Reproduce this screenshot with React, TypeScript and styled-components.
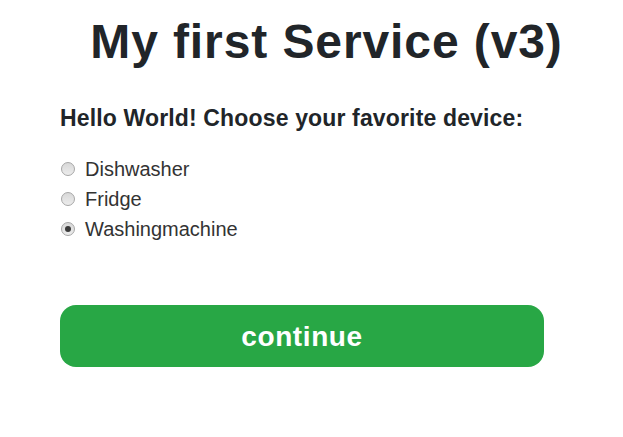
import React, { useState } from "react";
import styled, { createGlobalStyle } from "styled-components";

const Global = createGlobalStyle`
  html, body { margin: 0; padding: 0; background: #fff; }
  body { font-family: "Liberation Sans", Arial, sans-serif; color: #212529; }
`;

const Page = styled.div`
  display: flex;
  flex-direction: column;
  padding: 12px 79px 0 60px;
`;

const Title = styled.h1`
  margin: 0 -79px 0 -30px;
  font-size: 48px;
  font-weight: 700;
  line-height: 60px;
  letter-spacing: 0.9px;
  text-align: center;
  white-space: nowrap;
  color: #212529;
`;

const Question = styled.h2`
  margin: 33px 0 0 0;
  font-size: 23px;
  font-weight: 700;
  line-height: 26px;
  letter-spacing: 0.15px;
  white-space: nowrap;
  color: #212529;
`;

const Options = styled.div`
  display: flex;
  flex-direction: column;
  margin-top: 23px;
`;

const Option = styled.label`
  display: flex;
  align-items: center;
  height: 30px;
  font-size: 20px;
  color: #333;
  cursor: pointer;
`;

const Radio = styled.input`
  appearance: none;
  -webkit-appearance: none;
  margin: 0 10px 0 1px;
  width: 14px;
  height: 14px;
  border-radius: 50%;
  border: 1px solid #a6a6a6;
  background: linear-gradient(#d8d8d8, #ececec);
  box-sizing: border-box;
  display: grid;
  place-items: center;
  &:checked::after {
    content: "";
    width: 6px;
    height: 6px;
    border-radius: 50%;
    background: #3a3a3a;
  }
`;

const Button = styled.button`
  margin-top: 61px;
  height: 62px;
  border: none;
  border-radius: 16px;
  background: #28a745;
  color: #fff;
  font-family: "Liberation Sans", Arial, sans-serif;
  font-size: 28px;
  font-weight: 700;
  letter-spacing: 0.6px;
  padding-top: 2px;
  cursor: pointer;
`;

const devices = ["Dishwasher", "Fridge", "Washingmachine"];

export default function App() {
  const [value, setValue] = useState("Washingmachine");
  return (
    <>
      <Global />
      <Page>
        <Title>My first Service (v3)</Title>
        <Question>Hello World! Choose your favorite device:</Question>
        <Options>
          {devices.map((d) => (
            <Option key={d}>
              <Radio
                type="radio"
                name="device"
                checked={value === d}
                onChange={() => setValue(d)}
              />
              {d}
            </Option>
          ))}
        </Options>
        <Button>continue</Button>
      </Page>
    </>
  );
}
